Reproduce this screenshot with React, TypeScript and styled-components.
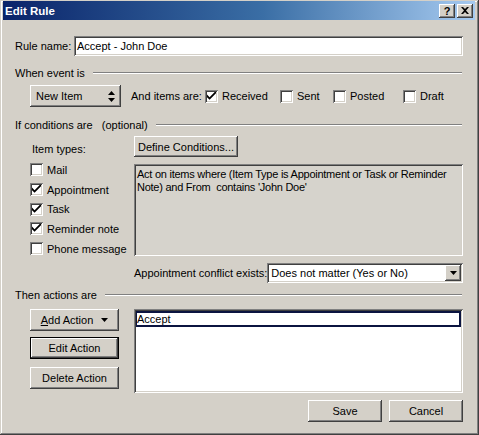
import React from "react";
import styled, { createGlobalStyle } from "styled-components";

const GlobalStyle = createGlobalStyle`
  html, body { margin: 0; padding: 0; background: #d4d0c8; }
  body { font-family: "Liberation Sans", Arial, sans-serif; font-size: 11px; color: #000; }
`;

/* ------------------------------ Styled UI ------------------------------- */
const raised = `
  background: #d4d0c8;
  box-shadow: inset -1px -1px #404040, inset 1px 1px #fff, inset -2px -2px #808080, inset 2px 2px #d4d0c8;
`;

const sunken = `
  box-shadow: inset 1px 1px #808080, inset -1px -1px #fff, inset 2px 2px #404040, inset -2px -2px #d4d0c8;
`;

const Window = styled.div`
  width: 479px;
  height: 435px;
  box-sizing: border-box;
  padding: 1px 4px 4px 3px;
  background: #d4d0c8;
  box-shadow: inset -1px -1px #404040, inset 1px 1px #d4d0c8, inset -2px -2px #808080, inset 2px 2px #fff;
  display: flex;
  flex-direction: column;
`;

const TitleBar = styled.div`
  height: 19px;
  display: flex;
  align-items: center;
  justify-content: space-between;
  padding: 0 2px 0 2px;
  background: linear-gradient(to right, #0a246a, #3a6ea5 55%, #a6caf0);
  color: #fff;
  font-weight: 700;
  font-size: 11.5px;
`;

const TitleButtons = styled.div`
  display: flex;
  gap: 2px;
`;

const TitleBtn = styled.div`
  ${raised}
  width: 16px;
  height: 14px;
  display: grid;
  place-items: center;
  color: #000;
  font-size: 11px;
  font-weight: 700;
`;

const Content = styled.div`
  flex: 1;
  display: flex;
  flex-direction: column;
  padding: 16px 12px 0 12px;
`;

const Row = styled.div<{ $mt?: number }>`
  display: flex;
  align-items: center;
  margin-top: ${({ $mt }) => $mt ?? 0}px;
`;

const Label = styled.span<{ $w?: number }>`
  white-space: nowrap;
  ${({ $w }) => ($w ? `width: ${$w}px; flex: none;` : "")}
`;

const TextInput = styled.div`
  ${sunken}
  flex: 1;
  height: 20px;
  background: #fff;
  display: flex;
  align-items: center;
  padding: 0 3px;
  box-sizing: border-box;
`;

const SectionHead = styled.div<{ $mt: number }>`
  display: flex;
  align-items: center;
  gap: 8px;
  margin-top: ${({ $mt }) => $mt}px;
  height: 14px;
  padding-right: 1px;
  white-space: nowrap;

  &::after {
    content: "";
    flex: 1;
    height: 0;
    border-top: 1px solid #808080;
    border-bottom: 1px solid #fff;
  }
`;

const Indented = styled.div`
  padding-left: 15px;
`;

const Spinner = styled.div`
  ${raised}
  width: 91px;
  height: 22px;
  box-sizing: border-box;
  display: flex;
  align-items: center;
  justify-content: space-between;
  padding: 0 6px 0 6px;
  margin-right: 10px;
`;

const CheckItem = styled.label<{ $w?: number }>`
  display: flex;
  align-items: center;
  gap: 4px;
  ${({ $w }) => ($w ? `width: ${$w}px;` : "")}
  height: 19.7px;
  white-space: nowrap;
`;

const Box = styled.span`
  ${sunken}
  width: 13px;
  height: 13px;
  flex: none;
  background: #fff;
  display: grid;
  place-items: center;
`;

const CondGrid = styled.div`
  display: grid;
  grid-template-columns: 104px 1fr;
  margin-top: 4px;
`;

const Column = styled.div`
  display: flex;
  flex-direction: column;
  min-width: 0;
`;

const SubLabel = styled.div`
  height: 14px;
  margin-top: 7px;
  margin-bottom: 3px;
  padding-left: 2px;
`;

const Button = styled.div<{ $w?: number; $h?: number; $default?: boolean }>`
  ${raised}
  ${({ $default }) =>
    $default
      ? `box-shadow: inset 0 0 0 1px #000, inset -2px -2px #404040, inset 2px 2px #fff, inset -3px -3px #808080;`
      : ""}
  width: ${({ $w }) => $w ?? 89}px;
  height: ${({ $h }) => $h ?? 22}px;
  box-sizing: border-box;
  display: flex;
  align-items: center;
  justify-content: center;
  gap: 8px;
  flex: none;
  white-space: nowrap;
`;

const ConditionText = styled.div`
  ${sunken}
  margin-top: 7px;
  height: 92px;
  box-sizing: border-box;
  padding: 4px 3px;
  background: #d6d3cc;
  line-height: 13px;
  letter-spacing: -0.25px;
  white-space: nowrap;
  overflow: hidden;
`;

const Select = styled.div`
  ${sunken}
  margin-left: auto;
  width: 196px;
  flex: none;
  height: 20px;
  box-sizing: border-box;
  background: #fff;
  display: flex;
  align-items: center;
  padding: 2px 2px 2px 4px;
`;

const SelectBtn = styled.span`
  ${raised}
  margin-left: auto;
  width: 16px;
  height: 16px;
  display: grid;
  place-items: center;
`;

const ActionGrid = styled.div`
  display: grid;
  grid-template-columns: 104px 1fr;
  margin-top: 7px;
`;

const ActionButtons = styled.div`
  display: flex;
  flex-direction: column;
  gap: 6px;

  & > :nth-child(3) {
    margin-top: 2px;
  }
`;

const ActionList = styled.div`
  ${sunken}
  height: 84px;
  box-sizing: border-box;
  background: #fff;
  padding: 2px;
`;

const EditingItem = styled.div`
  height: 16px;
  box-sizing: border-box;
  border: 2px solid #0b1440;
  border-left-width: 1px;
  display: flex;
  align-items: center;
`;

const Footer = styled.div`
  display: flex;
  justify-content: flex-end;
  gap: 7px;
  margin-top: 7px;
`;

const Check = () => (
  <svg width="9" height="9" viewBox="0 0 7 7">
    <path d="M0 2 L0 4 L2 6 L7 1 L7 -1 L2 4 Z" fill="#000" />
  </svg>
);

const CheckBox: React.FC<{ label: string; checked?: boolean; w?: number }> = ({ label, checked, w }) => (
  <CheckItem $w={w}>
    <Box>{checked && <Check />}</Box>
    {label}
  </CheckItem>
);

const UpDown = () => (
  <svg width="7" height="11" viewBox="0 0 7 11">
    <path d="M3.5 0 L7 4 L0 4 Z M0 7 L7 7 L3.5 11 Z" fill="#000" />
  </svg>
);

const DownArrow = () => (
  <svg width="7" height="4" viewBox="0 0 7 4">
    <path d="M0 0 L7 0 L3.5 4 Z" fill="#000" />
  </svg>
);

export default function App() {
  return (
    <>
      <GlobalStyle />
      <Window>
        <TitleBar>
          <span>Edit Rule</span>
          <TitleButtons>
            <TitleBtn>?</TitleBtn>
            <TitleBtn>
              <svg width="8" height="7" viewBox="0 0 8 7">
                <path d="M0 0 L2 0 L4 2 L6 0 L8 0 L5 3.5 L8 7 L6 7 L4 5 L2 7 L0 7 L3 3.5 Z" fill="#000" />
              </svg>
            </TitleBtn>
          </TitleButtons>
        </TitleBar>

        <Content>
          <Row>
            <Label $w={59}>Rule name:</Label>
            <TextInput>Accept - John Doe</TextInput>
          </Row>

          <SectionHead $mt={10}>When event is</SectionHead>

          <Indented>
            <Row $mt={5}>
              <Spinner>
                New Item
                <UpDown />
              </Spinner>
              <Label $w={74}>And items are:</Label>
              <CheckBox label="Received" checked w={75} />
              <CheckBox label="Sent" w={53} />
              <CheckBox label="Posted" w={70} />
              <CheckBox label="Draft" />
            </Row>
          </Indented>

          <SectionHead $mt={11}>
            <span>If conditions are&nbsp;&nbsp;&nbsp;(optional)</span>
          </SectionHead>

          <Indented>
            <CondGrid>
              <Column>
                <SubLabel>Item types:</SubLabel>
                <CheckBox label="Mail" />
                <CheckBox label="Appointment" checked />
                <CheckBox label="Task" checked />
                <CheckBox label="Reminder note" checked />
                <CheckBox label="Phone message" />
              </Column>
              <Column>
                <Button $w={104} $h={21}>Define Conditions...</Button>
                <ConditionText>
                  Act on items where (Item Type is Appointment or Task or Reminder
                  <br />
                  Note) and From&nbsp; contains 'John Doe'
                </ConditionText>
                <Row $mt={7}>
                  <Label>Appointment conflict exists:</Label>
                  <Select>
                    Does not matter (Yes or No)
                    <SelectBtn>
                      <DownArrow />
                    </SelectBtn>
                  </Select>
                </Row>
              </Column>
            </CondGrid>
          </Indented>

          <SectionHead $mt={5}>Then actions are</SectionHead>

          <Indented>
            <ActionGrid>
              <ActionButtons>
                <Button>
                  <span>
                    <u>A</u>dd Action
                  </span>
                  <DownArrow />
                </Button>
                <Button $default>Edit Action</Button>
                <Button>Delete Action</Button>
              </ActionButtons>
              <ActionList>
                <EditingItem>Accept</EditingItem>
              </ActionList>
            </ActionGrid>
          </Indented>

          <Footer>
            <Button $w={74}>Save</Button>
            <Button $w={74}>Cancel</Button>
          </Footer>
        </Content>
      </Window>
    </>
  );
}
